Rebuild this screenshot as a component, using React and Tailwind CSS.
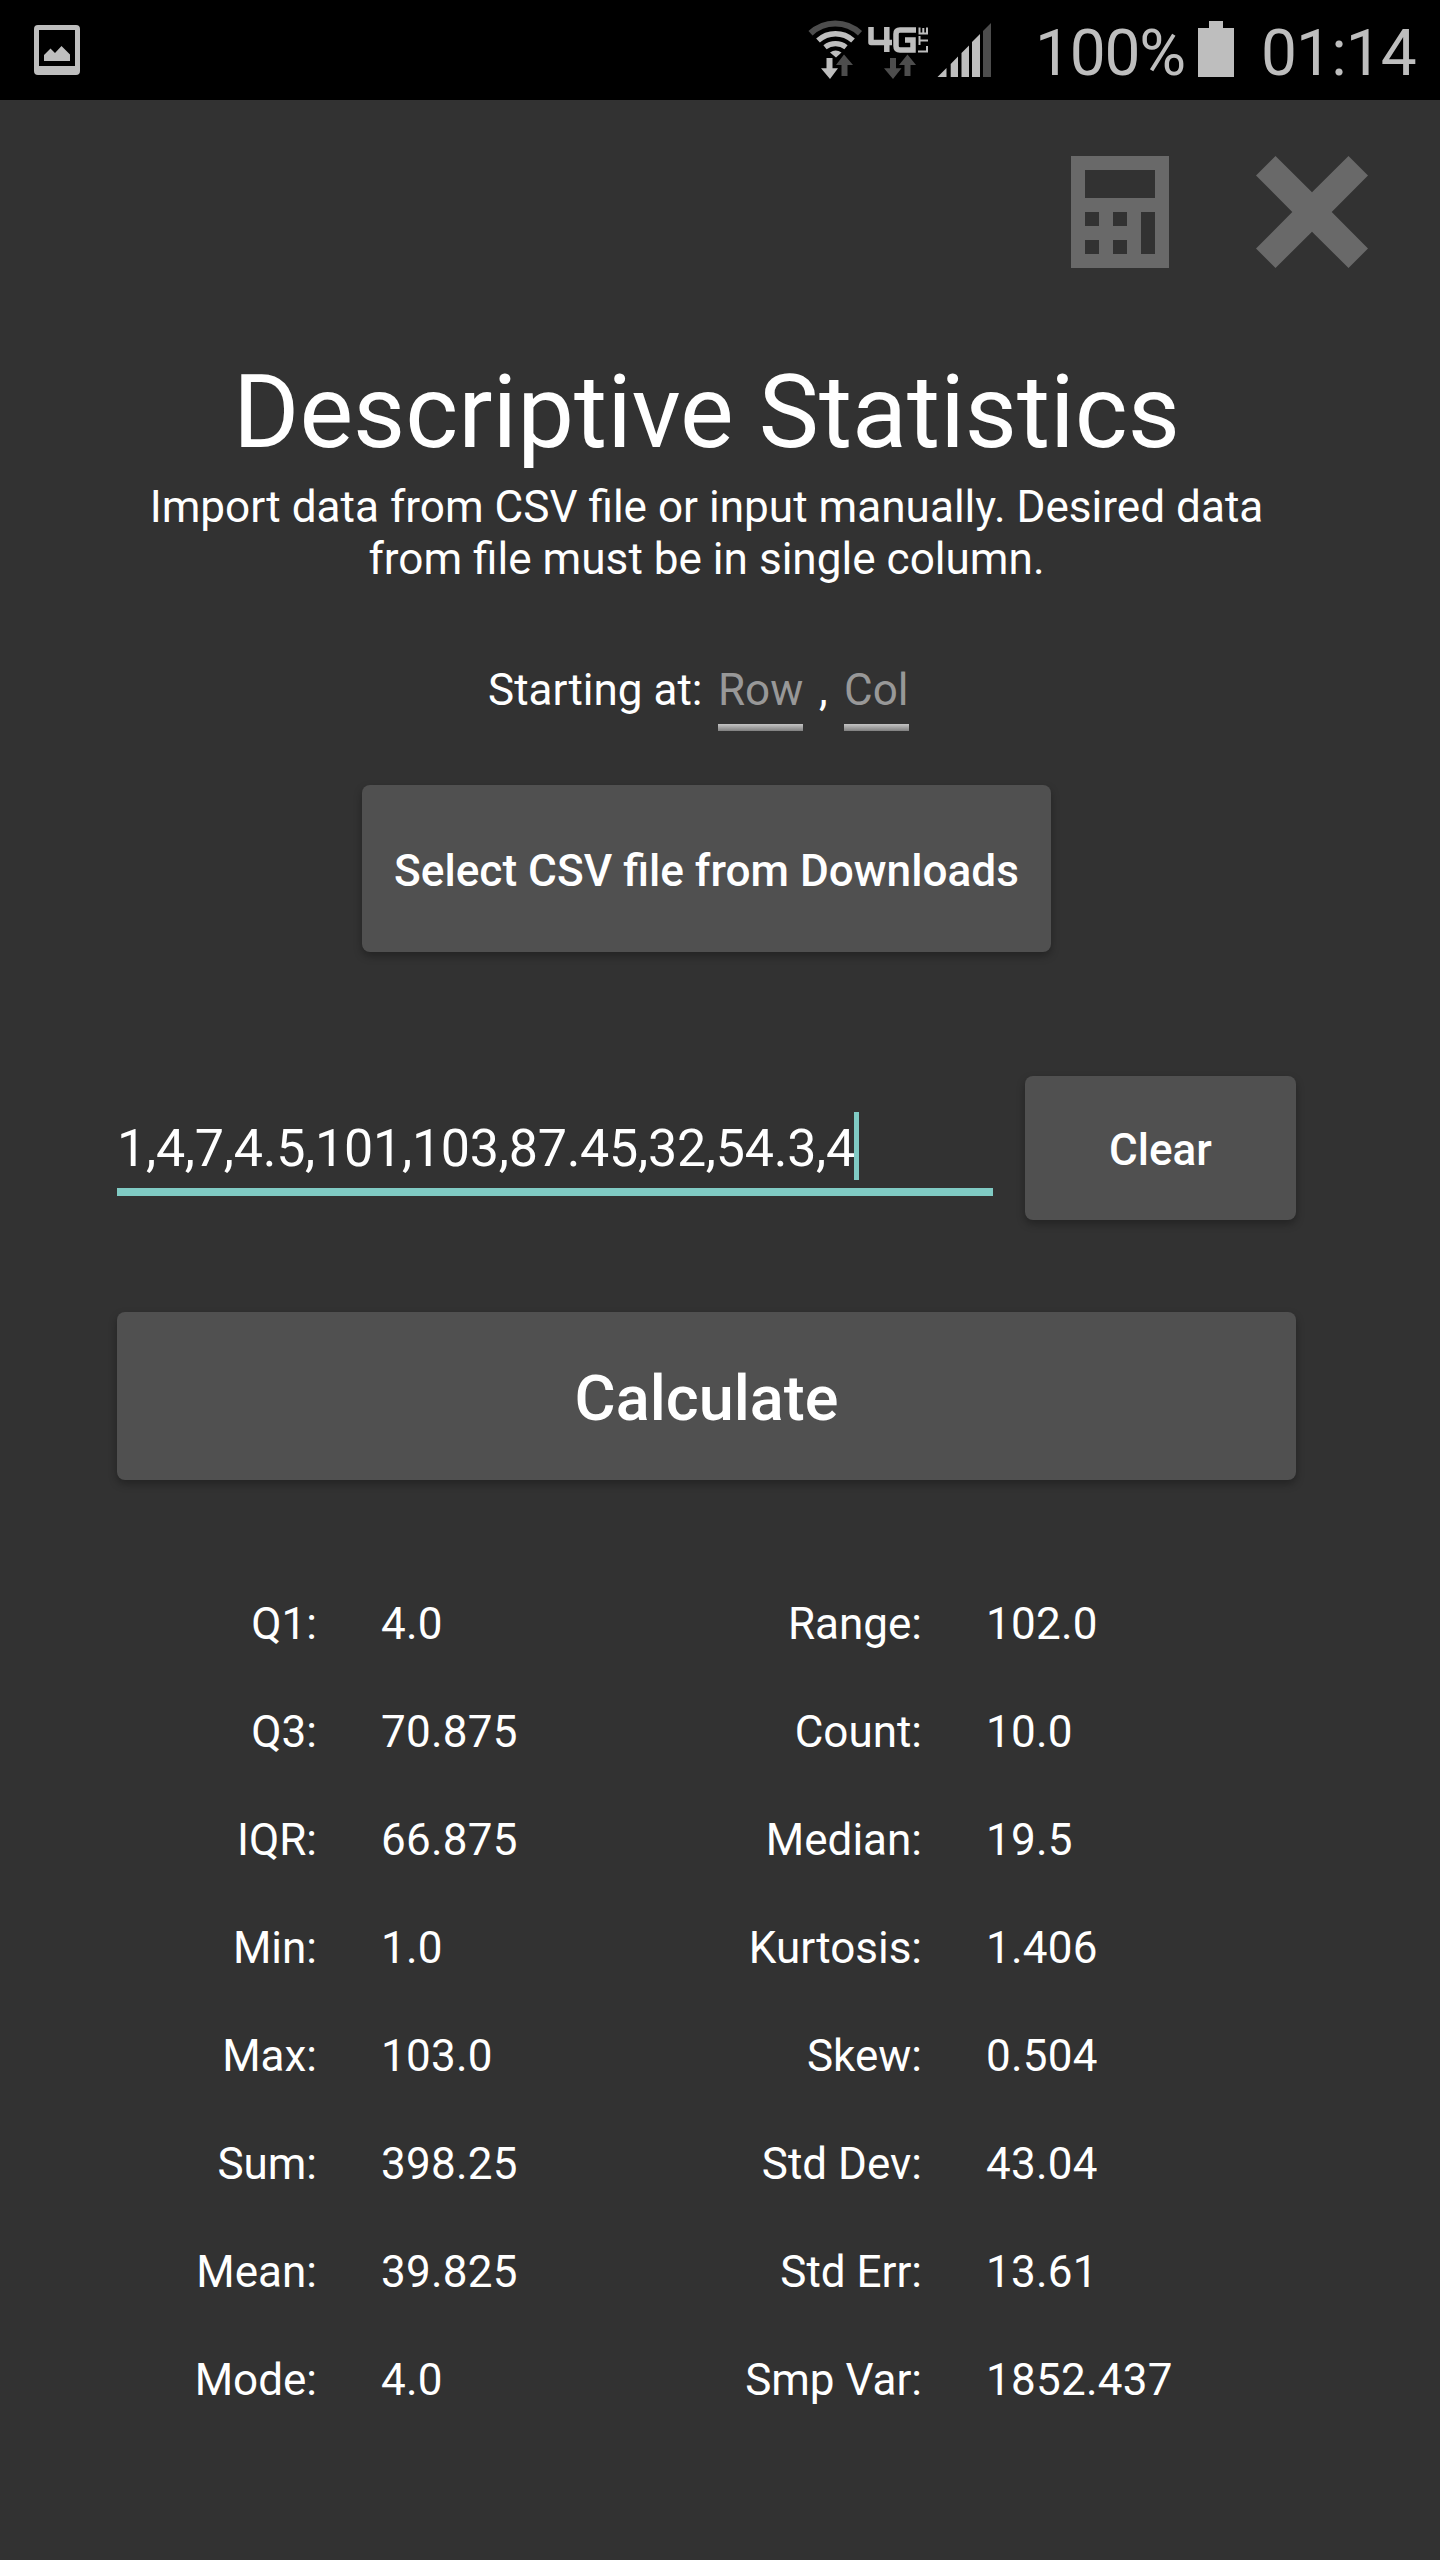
const LIGHT = "#bebebe";
const DIM = "#4d4d4d";

function StatusBar() {
  return (
    <header className="flex h-[100px] items-start bg-black text-[#bebebe]">
      <svg className="ml-[34px] mt-[25px] h-[50px] w-[46px]" viewBox="0 0 46 50" fill={LIGHT}>
        <path fillRule="evenodd" d="M4 0H42Q46 0 46 4V46Q46 50 42 50H4Q0 50 0 46V4Q0 0 4 0ZM5 5V41H41V5Z" />
        <path d="M10 36V30L16.5 23.5L21 28L27.500 21L36 29.500V36Z" />
      </svg>
      <svg className="ml-[727px] mt-[18px] h-[64px] w-[56px]" viewBox="807 18 56 64" fill="none">
        <path d="M810.500 33.300A36 36 0 0 1 860 33.300" stroke={DIM} strokeWidth="6" />
        <path d="M818 40.500A26 26 0 0 1 853 40.500" stroke={LIGHT} strokeWidth="5.500" />
        <path d="M825 47.300A17 17 0 0 1 846 47.300" stroke={LIGHT} strokeWidth="5.200" />
        <path d="M830 52.500Q835.500 48.500 841.500 52.500L836 57.500Z" fill={LIGHT} />
        <path d="M826.500 58H832.500V68.300H838L830 79L821 68.300H826.500Z" fill={LIGHT} />
        <path d="M841.500 76H847.500V65H853L844 54.500L836 65H841.500Z" fill={DIM} />
      </svg>
      <svg className="ml-[4px] mt-[18px] h-[64px] w-[64px]" viewBox="867 18 64 64" fill="none">
        <path d="M871 27V42.500H892M886.800 27V52" stroke={LIGHT} strokeWidth="5.500" strokeLinejoin="round" />
        <path d="M916 30H900Q896 30 896 34V46Q896 50 900 50H913V40H905" stroke={LIGHT} strokeWidth="5.500" />
        <g stroke={LIGHT} strokeWidth="2">
          <path d="M918 51.500H927V46" />
          <path d="M919.500 36V45M919.500 40.500H928" />
          <path d="M919.500 27.500V33.500M918.500 33.500H928M927 34.500V27.500M923.300 28V33.500" />
        </g>
        <path d="M890 58H896V68.300H901.500L893 79L884 68.300H890Z" fill={DIM} />
        <path d="M904.500 76H910.500V65H916L907.500 54.500L899 65H904.500Z" fill={DIM} />
      </svg>
      <svg className="ml-[6px] mt-[22px] h-[55px] w-[54px]" viewBox="937 22 54 55" fill={LIGHT}>
        <path d="M937.500 77L946.500 68V77Z" />
        <path d="M950.700 64L958 56.500V77H950.700Z" />
        <path d="M961.500 53L969 45.500V77H961.500Z" />
        <path d="M972 42L980 34V77H972Z" />
        <path fill={DIM} d="M983 31L991 23V77H983Z" />
      </svg>
      <span className="ml-[44px] mt-[14px] w-[163px] whitespace-nowrap text-[64px] leading-[80px] tracking-[-1.2px]">100%</span>
      <svg className="h-[56px] w-[36px] mt-[21px]" viewBox="0 0 36 56" fill={LIGHT}>
        <path d="M11 0H25V7H36V56H0V7H11Z" />
      </svg>
      <span className="ml-[27px] mt-[14px] whitespace-nowrap text-[64px] leading-[80px] tracking-[-0.9px]">01:14</span>
    </header>
  );
}

function Toolbar() {
  return (
    <nav className="flex pl-[1071px] pt-[56px]">
      <button className="h-[112px] w-[98px]" aria-label="Calculator">
        <svg className="h-full w-full" viewBox="0 0 98 112" fill="#696969">
          <path fillRule="evenodd" d="M0 0H98V112H0ZM14 14V42H84V14ZM14 56V70H28V56ZM42 56V70H56V56ZM70 56V98H84V56ZM14 84V98H28V84ZM42 84V98H56V84Z" />
        </svg>
      </button>
      <button className="ml-[87px] h-[112px] w-[112px]" aria-label="Close">
        <svg className="h-full w-full" viewBox="0 0 112 112" fill="#696969">
          <path d="M19.500 0L56 36.300L92.500 0L112 19.500L75.700 56L112 92.500L92.500 112L56 75.700L19.500 112L0 92.500L36.300 56L0 19.500Z" />
        </svg>
      </button>
    </nav>
  );
}

function Button({ className, children }) {
  return (
    <button className={`rounded-[8px] bg-[#505050] font-medium shadow-[0_4px_8px_rgba(0,0,0,0.3)] ${className}`}>
      {children}
    </button>
  );
}

function Hint({ className, children }) {
  return (
    <span className={`flex h-[67px] flex-col justify-between whitespace-nowrap text-[#989898] ${className}`}>
      <span className="leading-[52px]">{children}</span>
      <span className="h-[7px] bg-gradient-to-b from-[#c4c4c4] to-[#808080]" />
    </span>
  );
}

const STATS = [
  ["Q1:", "4.0", "Range:", "102.0"],
  ["Q3:", "70.875", "Count:", "10.0"],
  ["IQR:", "66.875", "Median:", "19.5"],
  ["Min:", "1.0", "Kurtosis:", "1.406"],
  ["Max:", "103.0", "Skew:", "0.504"],
  ["Sum:", "398.25", "Std Dev:", "43.04"],
  ["Mean:", "39.825", "Std Err:", "13.61"],
  ["Mode:", "4.0", "Smp Var:", "1852.437"],
];

export default function App() {
  return (
    <div className="h-[2560px] w-[1440px] overflow-hidden bg-[#323232] font-[Roboto,sans-serif] text-[44px] text-white">
      <StatusBar />
      <Toolbar />
      <main className="ml-[117px] w-[1179px]">
        <h1 className="mt-[86px] text-center text-[101.2px] leading-[118px]">Descriptive Statistics</h1>
        <p className="mt-[9px] text-center text-[44.12px] leading-[52px]">
          Import data from CSV file or input manually. Desired data
          <br />
          from file must be in single column.
        </p>
        <div className="mt-[79px] flex h-[80px] pl-[371px]">
          <span className="w-[230px] whitespace-nowrap leading-[52px]">Starting at:</span>
          <Hint className="w-[85px]">Row</Hint>
          <span className="w-[41px] pl-[16px] leading-[52px]">,</span>
          <Hint className="w-[65px]">Col</Hint>
        </div>
        <Button className="mt-[41px] mx-auto block h-[167px] w-[689px] pt-[6px] text-[44.16px]">Select CSV file from Downloads</Button>
        <div className="mt-[124px] flex h-[144px] justify-between">
          <div className="flex w-[876px] flex-col">
            <div className="mt-[36px] flex h-[76px] text-[52px] leading-[74px] tracking-[-0.27px]">
              <span>1,4,7,4.5,101,103,87.45,32,54.3,4</span>
              <span className="-ml-px h-[68px] w-[5px] bg-[#80cbc4]" />
            </div>
            <div className="h-[8px] bg-[#80cbc4]" />
          </div>
          <Button className="w-[271px] pt-[4px]">Clear</Button>
        </div>
        <Button className="mt-[92px] h-[168px] w-full pt-[7px] text-[63px]">Calculate</Button>
        <dl className="mt-[90px] grid auto-rows-[108px] grid-cols-[200px_330px_275px_374px] leading-[108px]">
          {STATS.map(([a, b, c, d]) => (
            <div key={a} className="contents">
              <dt className="text-right">{a}</dt>
              <dd className="pl-[64px] tracking-[0.25px]">{b}</dd>
              <dt className="text-right">{c}</dt>
              <dd className="pl-[64px] tracking-[0.25px]">{d}</dd>
            </div>
          ))}
        </dl>
      </main>
    </div>
  );
}
